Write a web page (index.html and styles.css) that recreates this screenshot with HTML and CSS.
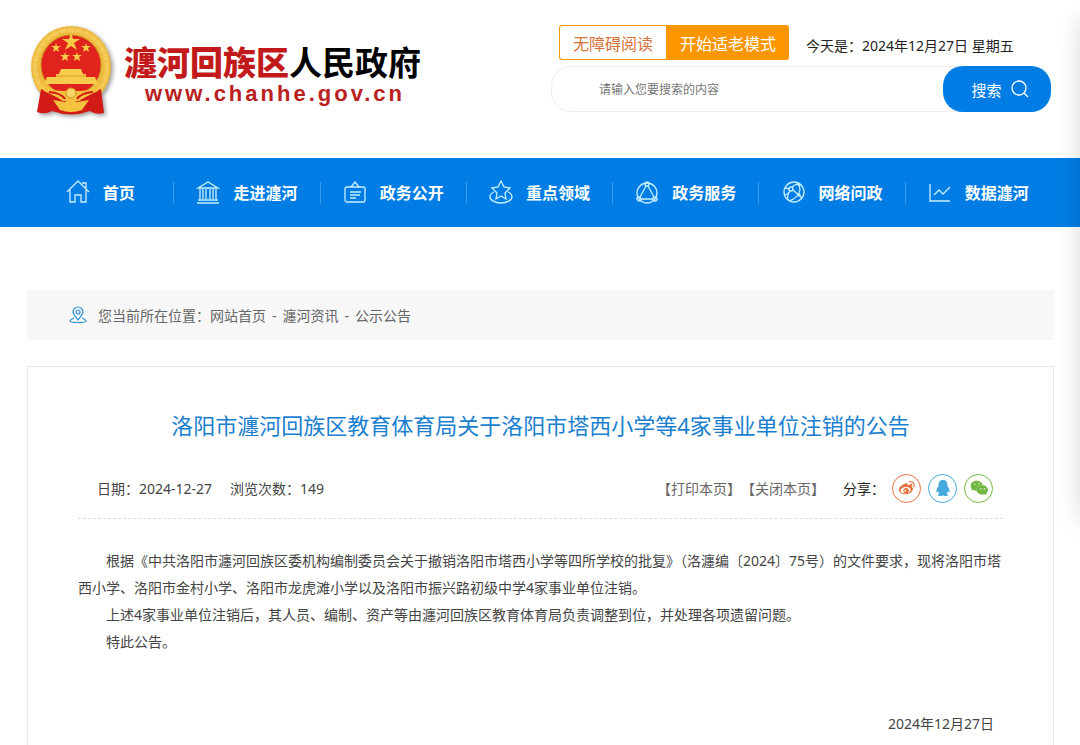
FILE: index.html
```html
<!DOCTYPE html>
<html lang="zh-CN">
<head>
    <meta charset="UTF-8">
    <meta name="viewport" content="width=device-width, initial-scale=1.0">
    <title>瀍河回族区人民政府</title>
    <link rel="stylesheet" href="styles.css">
</head>
<body>
    <header class="header">
        <a class="logo" href="#">
            <svg class="emblem" viewBox="0 0 84 92" aria-hidden="true">
                <ellipse cx="42" cy="42" rx="40" ry="41" fill="#eebb40"/>
                <ellipse cx="42" cy="42" rx="36" ry="37" fill="none" stroke="#f4cb58" stroke-width="4" stroke-dasharray="7 1"/>
                <circle cx="42" cy="40" r="30" fill="#e0231c" stroke="#c98a1c"/>
                <path d="M12 64 Q42 78 72 64 L75 88 Q66 90 61 86 Q42 93 23 86 Q16 90 8 87 Z" fill="#d21a17"/>
                <path d="M12 58 Q22 67 36 66 L42 63 L48 66 Q62 67 72 58 L69 66 Q56 72 50 76 H34 Q28 72 15 66 Z" fill="#f5c23f"/>
                <path d="M20 67 Q32 68 36 74 M64 67 Q52 68 48 74" fill="none" stroke="#d21a17" stroke-width="2"/>
                <circle cx="42" cy="68" r="5" fill="#f8d568" stroke="#d28c1c"/>
                <path d="M31 85 L24 75 L36 77 Q42 72 48 77 L60 75 L53 85 Q42 89 31 85 Z" fill="#f5c23f"/>
                <path d="M30 49 L32 44 H52 L54 49 H57 V52 H66 L69 59 H15 L18 52 H27 V49 Z" fill="#f7cc4c"/>
                <path d="M27 51 H57" stroke="#dc9c28" stroke-width="1"/>
                <path d="M42 7l2 7h7l-6 4 3 7-6-4-6 4 3-7-6-4h7z" fill="#f6cb45"/>
                <g fill="#f6cb45">
                    <path id="star" d="M27 18l1 3h4l-3 2 1 4-3-2-3 2 1-4-3-2h4z"/>
                    <use href="#star" x="30"/>
                    <use href="#star" x="9" y="9"/>
                    <use href="#star" x="21" y="9"/>
                </g>
            </svg>
            <span class="logo-text">
                <span class="logo-name"><b>瀍河回族区</b>人民政府</span>
                <span class="logo-url">www.chanhe.gov.cn</span>
            </span>
        </a>

        <div class="tools">
            <div class="tools-top">
                <div class="modes">
                    <button type="button" class="mode">无障碍阅读</button>
                    <button type="button" class="mode mode-old">开始适老模式</button>
                </div>
                <span class="today">今天是：2024年12月27日 星期五</span>
            </div>
            <form class="search">
                <input type="text" aria-label="搜索" placeholder="请输入您要搜索的内容">
                <button type="button">搜索
                    <svg viewBox="0 0 18 18"><circle cx="8" cy="8" r="7"/><path d="M13 13l4 4"/></svg>
                </button>
            </form>
        </div>
    </header>

    <nav class="nav">
        <ul>
            <li><a href="#">
                <svg viewBox="0 0 24 24"><path d="M1 12L12 1l11 11M4 10v12h5v-7h6v7h5V10M16 3h4v5"/></svg>
                首页</a></li>
            <li><a href="#">
                <svg viewBox="0 0 24 24"><path d="M2 8l10-6 10 6zM2 20h20M1 23h22M4 9v10M7 9v10M10 9v10M14 9v10M17 9v10M20 9v10"/></svg>
                走进瀍河</a></li>
            <li><a href="#">
                <svg viewBox="0 0 24 24"><rect x="2" y="7" width="20" height="15" rx="2"/><path d="M8 7l4-5 4 5M7 12h11M7 15h10M7 18h6"/></svg>
                政务公开</a></li>
            <li><a href="#">
                <svg viewBox="0 0 24 24"><path d="M12 1l3 6 6 1-5 5 1 6-5-3-5 3 1-6-5-5 6-1zM5 12c-3 1-4 3-4 5 0 3 5 6 11 6s11-3 11-6c0-2-1-4-4-5"/></svg>
                重点领域</a></li>
            <li><a href="#">
                <svg viewBox="0 0 24 24"><circle cx="12" cy="13" r="10"/><circle cx="12" cy="4" r="2"/><circle cx="4" cy="19" r="2"/><circle cx="20" cy="19" r="2"/><path d="M11 6L5 17M13 6l6 11M6 19h12"/></svg>
                政务服务</a></li>
            <li><a href="#">
                <svg viewBox="0 0 24 24"><circle cx="12" cy="12" r="10"/><circle cx="9" cy="9" r="2"/><circle cx="17" cy="15" r="1"/><path d="M3 8l5 1M10 7c3-3 6-3 9-2M11 10l9 8M8 11c-2 3-3 6-2 9M7 21c4-1 10-5 11-11 0-3-1-5-3-7M3 15c3-1 4-2 5-4"/></svg>
                网络问政</a></li>
            <li><a href="#">
                <svg viewBox="0 0 24 24"><path d="M2 4v17h20M6 15l5-5 4 4 7-7"/></svg>
                数据瀍河</a></li>
        </ul>
    </nav>

    <main class="main">
        <div class="crumbs">
            <svg viewBox="0 0 18 18"><path d="M9 14C6 10 4 8 4 6a5 5 0 0 1 10 0c0 2-2 4-5 8z"/><circle cx="9" cy="6" r="2"/><path d="M5 12c-2 1-4 2-4 3 0 2 16 2 16 0 0-1-2-2-4-3"/></svg>
            <span>您当前所在位置：<a href="#">网站首页</a><i>-</i><a href="#">瀍河资讯</a><i>-</i><a href="#">公示公告</a></span>
        </div>

        <article class="article">
            <h1>洛阳市瀍河回族区教育体育局关于洛阳市塔西小学等4家事业单位注销的公告</h1>
            <div class="meta">
                <span>日期：2024-12-27</span>
                <span>浏览次数：149</span>
                <div class="actions">
                    <a href="#">【打印本页】</a>
                    <a href="#">【关闭本页】</a>
                </div>
                <div class="share">
                    <span>分享：</span>
                    <a class="weibo" href="#" aria-label="微博">
                        <svg viewBox="0 0 20 20"><path fill-rule="evenodd" d="M8 5c2-1 3 0 3 2 3-1 5 0 4 2 2 1 2 3 1 4-2 3-5 4-8 4-4 0-7-2-7-5s4-6 7-7zm1 4c-4 0-6 2-6 4s2 3 5 3c4 0 6-2 6-4s-2-3-5-3z"/><path fill-rule="evenodd" d="M9 10a3 3 0 1 0 0 6 3 3 0 0 0 0-6zm-1 2a1 1 0 1 1 0 2 1 1 0 0 1 0-2z"/><path d="M12 3c4-1 7 2 6 6M13 6c2-1 3 1 2 3" fill="none" stroke="currentColor" stroke-width="1.3"/></svg>
                    </a>
                    <a class="qq" href="#" aria-label="QQ">
                        <svg viewBox="0 0 20 20"><path d="M10 1c4 0 5 3 5 7 2 3 3 5 2 7-1 0-1-1-2-1 0 1-1 2-1 2 2 1 2 3-1 3-1 0-2 0-3-1-1 1-2 1-3 1-3 0-3-2-1-3 0 0-1-1-1-2-1 0-1 1-2 1-1-2 0-4 2-7 0-4 1-7 5-7z"/></svg>
                    </a>
                    <a class="wechat" href="#" aria-label="微信">
                        <svg viewBox="0 0 20 20"><path d="M7 2c4 0 7 2 7 5-4 0-7 2-7 6-1 0-2 0-3-1l-2 1v-2C-1 7 2 2 7 2z"/><path d="M14 7c3 0 6 2 6 5 0 2-1 3-2 4v2l-2-1c-4 1-9-1-9-5 0-3 3-5 7-5z"/><g fill="#fff" opacity="0.6"><circle cx="5" cy="6" r="1"/><circle cx="10" cy="5" r="1"/><circle cx="12" cy="11" r="1"/><circle cx="16" cy="11" r="1"/></g></svg>
                    </a>
                </div>
            </div>
            <div class="content">
                <p>根据《中共洛阳市瀍河回族区委机构编制委员会关于撤销洛阳市塔西小学等四所学校的批复》（洛瀍编〔2024〕75号）的文件要求，现将洛阳市塔西小学、洛阳市金村小学、洛阳市龙虎滩小学以及洛阳市振兴路初级中学4家事业单位注销。</p>
                <p>上述4家事业单位注销后，其人员、编制、资产等由瀍河回族区教育体育局负责调整到位，并处理各项遗留问题。</p>
                <p>特此公告。</p>
                <p class="sign">2024年12月27日</p>
            </div>
        </article>
    </main>
</body>
</html>
```
FILE: styles.css
```css
:root {
    --blue: #007de4;
    --orange: #fb9600;
}

* {
    box-sizing: border-box;
}

body {
    margin: 0;
    background: #fff;
    color: #444;
    font-family: "Noto Sans", "Noto Sans CJK SC", sans-serif;
    font-size: 14px;
}

/* 右侧阴影 */
body::after {
    content: "";
    position: fixed;
    top: 20px;
    left: 100%;
    width: 60px;
    height: 500px;
    box-shadow: 0 0 24px rgba(0, 0, 0, 0.15);
    pointer-events: none;
}

a {
    color: inherit;
    text-decoration: none;
}

button,
input {
    font-family: inherit;
}

svg {
    flex-shrink: 0;
}

/* 页头 */
.header {
    display: flex;
    justify-content: space-between;
    height: 158px;
    padding: 25px 29px 0;
}

.logo {
    display: flex;
    align-items: flex-start;
    gap: 11px;
}

.emblem {
    width: 84px;
    height: 92px;
    filter: drop-shadow(2px 2px 2px rgba(0, 0, 0, 0.4));
}

.logo-text {
    display: flex;
    flex-direction: column;
    padding-top: 16px;
}

.logo-name {
    color: #000;
    font-size: 33px;
    line-height: 44px;
    font-weight: bold;
}

.logo-name b {
    color: #c21a1a;
}

.logo-url {
    padding-left: 21px;
    color: #b92020;
    font-family: "Liberation Sans", sans-serif;
    font-size: 22px;
    line-height: 18px;
    font-weight: bold;
    letter-spacing: 3px;
}

.tools {
    width: 500px;
}

.tools-top {
    display: flex;
    align-items: center;
    gap: 17px;
    padding-left: 8px;
}

.modes {
    display: flex;
}

.mode {
    height: 35px;
    padding: 0 13px;
    border: 1px solid var(--orange);
    border-right: 0;
    border-radius: 3px 0 0 3px;
    background: #fff;
    color: #d5713a;
    font-size: 16px;
}

.mode-old {
    border-radius: 0 3px 3px 0;
    background: var(--orange);
    color: #fff;
}

.today {
    padding-top: 4px;
    color: #222;
    white-space: nowrap;
}

.search {
    display: flex;
    height: 46px;
    margin-top: 6px;
    border: 1px solid #eee;
    border-radius: 20px;
}

.search input {
    flex: 1;
    min-width: 0;
    padding: 0 0 0 47px;
    border: 0;
    background: none;
    font-size: 12px;
    outline: none;
}

.search input::placeholder {
    color: #757575;
}

.search button {
    display: flex;
    align-items: center;
    justify-content: center;
    gap: 9px;
    width: 108px;
    margin: -1px;
    padding: 0 0 0 6px;
    border: 0;
    border-radius: 20px;
    background: var(--blue);
    color: #fff;
    font-size: 15px;
}

.search svg {
    width: 18px;
    height: 18px;
    fill: none;
    stroke: #fff;
    stroke-width: 1.3;
}

/* 导航 */
.nav {
    padding: 0 29px 0 27px;
    background: var(--blue);
}

.nav ul {
    display: grid;
    grid-template-columns: repeat(7, 1fr);
    margin: 0;
    padding: 0;
    list-style: none;
}

.nav li {
    display: flex;
    align-items: center;
    height: 69px;
}

.nav li + li::before {
    content: "";
    width: 1px;
    height: 22px;
    background: #3c9bea;
}

.nav a {
    flex: 1;
    display: flex;
    align-items: center;
    justify-content: center;
    gap: 13px;
    padding-bottom: 2px;
    color: #fff;
    font-size: 16px;
    font-weight: bold;
    white-space: nowrap;
}

.nav svg {
    width: 24px;
    height: 24px;
    fill: none;
    stroke: #c8efff;
    stroke-width: 1.3;
}

/* 当前位置 */
.main {
    padding: 63px 26px 0 27px;
}

.crumbs {
    display: flex;
    align-items: center;
    gap: 11px;
    height: 50px;
    padding-left: 42px;
    background: #f7f7f7;
    color: #666;
}

.crumbs i {
    margin: 0 6px;
    font-style: normal;
}

.crumbs svg {
    width: 18px;
    height: 18px;
    fill: none;
    stroke: #2b8fd0;
    stroke-width: 1.2;
}

/* 正文 */
.article {
    margin-top: 26px;
    padding: 41px 50px 0;
    border: 1px solid #eaeaea;
    border-bottom: 0;
}

.article h1 {
    margin: 0;
    color: #1b7fd0;
    font-size: 22px;
    line-height: 34px;
    font-weight: normal;
    text-align: center;
}

.meta {
    display: flex;
    align-items: center;
    gap: 18px;
    height: 77px;
    padding: 16px 10px 0 19px;
    border-bottom: 1px dashed #ddd;
}

.actions {
    display: flex;
    margin-left: auto;
    color: #666;
}

.share {
    display: flex;
    align-items: center;
    gap: 7px;
}

.share span {
    color: #222;
}

.share a {
    display: flex;
    align-items: center;
    justify-content: center;
    width: 29px;
    height: 29px;
    border: 1px solid currentColor;
    border-radius: 50%;
}

.share svg {
    width: 18px;
    height: 18px;
    fill: currentColor;
}

.share .weibo {
    color: #e8703f;
}

.share .qq {
    color: #45a9dd;
}

.share .wechat {
    color: #72b840;
}

.content {
    padding: 28px 0;
    line-height: 27px;
}

.content p {
    margin: 0;
    text-indent: 2em;
}

.content .sign {
    margin-top: 55px;
    padding-right: 9px;
    text-align: right;
}
```
